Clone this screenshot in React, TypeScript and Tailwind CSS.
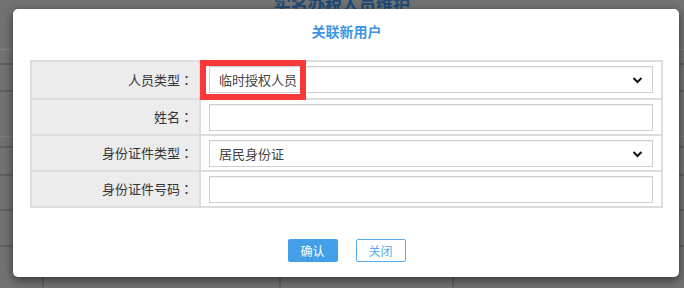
import React from "react";

const font = { fontFamily: '"Noto Sans CJK SC", "Noto Sans", sans-serif' };
const colonFont = { fontFamily: '"Noto Sans CJK JP", "Noto Sans CJK SC", sans-serif' };

const Chevron: React.FC = () => (
    <svg width="11" height="8" viewBox="0 0 11 8" className="shrink-0">
        <path d="M1.5 2 L5.5 6 L9.5 2" fill="none" stroke="#111" strokeWidth="2" />
    </svg>
);

const rows = [
    { label: "人员类型", value: "临时授权人员", select: true },
    { label: "姓名", value: "", select: false },
    { label: "身份证件类型", value: "居民身份证", select: true },
    { label: "身份证件号码", value: "", select: false },
];

const App: React.FC = () => {
    return (
        <div className="relative h-[288px] w-[684px] overflow-hidden bg-[#727272]" style={font}>
            {/* page behind the overlay */}
            <div className="flex h-[50px] justify-center border-b border-[#818181]">
                <span className="-mt-[6px] text-[17px] font-bold leading-[20px] text-[#1d4a78]">实名办税人员维护</span>
            </div>
            <div className="h-[15px] border-b-2 border-[#5f5f5f]" />
            <div className="h-[27px] border-b-2 border-[#5f5f5f]" />
            <div className="h-[45px] border-b border-[#7e7e7e]" />
            <div className="h-[11px] border-b-2 border-[#5f5f5f]" />
            <div className="h-[28px] border-b-2 border-[#5f5f5f]" />
            <div className="h-[35px] border-b-2 border-[#5f5f5f]" />
            <div className="h-[36px] border-b-2 border-[#5f5f5f]" />
            <div className="flex h-[40px]">
                <div className="w-[44px] border-r-2 border-[#5f5f5f]" />
                <div className="w-[237px] border-r-2 border-[#5f5f5f]" />
                <div className="w-[173px] border-r-2 border-[#5f5f5f]" />
            </div>

            {/* dialog */}
            <div className="absolute left-[13px] top-[9px] flex h-[268px] w-[666px] flex-col rounded-[5px] bg-white pl-[17px] pr-[16px] shadow-[0_3px_10px_rgba(0,0,0,0.55)]">
                <div className="flex h-[51px] items-start justify-center pt-[12px]">
                    <span className="text-[14px] font-bold leading-[20px] text-[#3d94e4]">关联新用户</span>
                </div>

                <div className="w-[633px] border-2 border-[#dcdcdc]">
                    {rows.map((r, i) => (
                        <div key={r.label} className={`flex h-[36px] ${i > 0 ? "border-t-2 border-[#dcdcdc]" : ""}`}>
                            <div className="flex w-[169px] items-center justify-end border-r-2 border-[#dcdcdc] bg-[#ececec] pr-[6px] text-[13px] text-[#333]">
                                {r.label}
                                <span style={colonFont}>：</span>
                            </div>
                            <div className="flex flex-1 items-start px-[8px] pt-[4px]">
                                <div className="flex h-[27px] w-full items-center justify-between border border-[#cfcfcf] bg-white pl-[9px] pr-[9px] text-[13px] text-[#444] shadow-[inset_0_1px_1px_rgba(0,0,0,0.06)]">
                                    <span>{r.value}</span>
                                    {r.select && <Chevron />}
                                </div>
                            </div>
                        </div>
                    ))}
                </div>

                <div className="mt-[31px] flex justify-center gap-[18px]">
                    <button className="h-[23px] w-[50px] rounded-[2px] bg-[#429fe8] text-[12px] text-white">确认</button>
                    <button className="h-[23px] w-[50px] rounded-[2px] border border-[#5aaaee] bg-white text-[12px] text-[#5aaaee]">关闭</button>
                </div>

                {/* annotation */}
                <div className="absolute left-[187px] top-[51px] h-[40px] w-[106px] border-[6px] border-[#f73838]" />
            </div>
        </div>
    );
};

export default App;
